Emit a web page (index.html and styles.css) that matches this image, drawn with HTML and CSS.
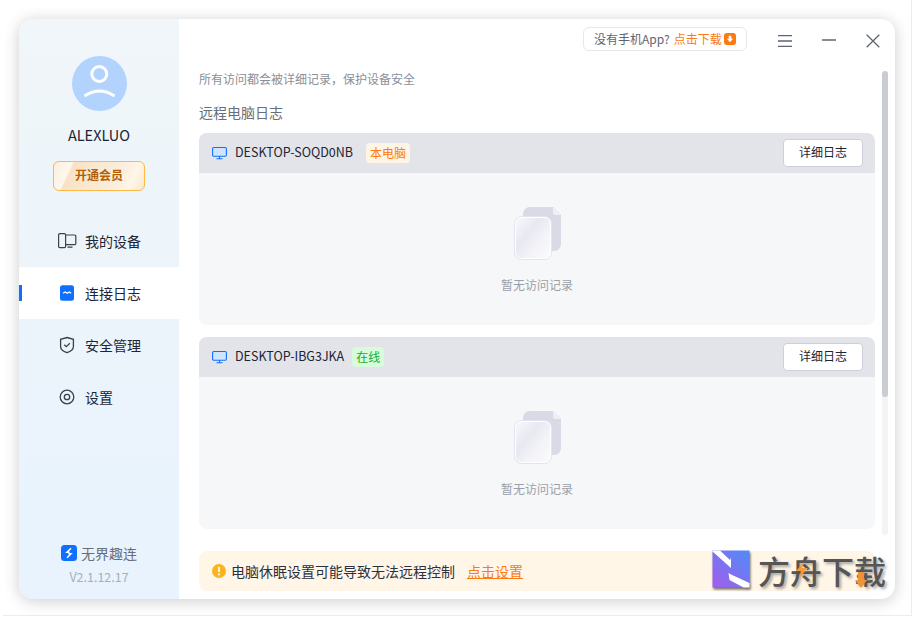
FILE: index.html
```html
<!DOCTYPE html>
<html lang="en">
<head>
    <meta charset="UTF-8">
    <meta name="viewport" content="width=device-width, initial-scale=1.0">
    <title>无界趣连</title>
    <link rel="stylesheet" href="styles.css">
</head>
<body>
    <div class="frame">
        <div class="window">
            <aside class="sidebar">
                <div class="avatar">
                    <svg width="55" height="55" viewBox="0 0 55 55" fill="none" stroke="#fff" stroke-width="3">
                        <circle cx="27.3" cy="18" r="7.500"/>
                        <path d="M12.500 40Q27.500 30 42.500 40"/>
                    </svg>
                </div>
                <div class="username">ALEXLUO</div>
                <button class="vip-btn">开通会员</button>
                <nav class="nav">
                    <div class="nav-item">
                        <svg width="20" height="20" viewBox="0 0 20 20" fill="none" stroke="#3a404c" stroke-width="1.200">
                            <rect x="1.600" y="2.600" width="7" height="14" rx="1.200"/>
                            <path d="M8.600 4h9a1.200 1.200 0 0 1 1.200 1.200v7.200a1.200 1.200 0 0 1-1.200 1.200h-9M10.500 16.200h5"/>
                        </svg>
                        <span>我的设备</span>
                    </div>
                    <div class="nav-item active">
                        <svg width="20" height="20" viewBox="0 0 20 20" fill="none">
                            <rect x="3" y="2.200" width="14" height="15.500" rx="2.500" fill="#0f6fff"/>
                            <path d="M6 10.300l2.200-1.300 2 1.300 2-1.300 2 1.300" stroke="#fff" stroke-width="1.200"/>
                        </svg>
                        <span>连接日志</span>
                    </div>
                    <div class="nav-item">
                        <svg width="20" height="20" viewBox="0 0 20 20" fill="none" stroke="#3a404c" stroke-width="1.300">
                            <path d="M10 2.500l6.400 1.800v7.200c0 2.800-2.800 5-6.400 6.200-3.600-1.200-6.400-3.400-6.400-6.200V4.300z"/>
                            <path d="M7.300 9.700l2 1.900 3.500-3.300"/>
                        </svg>
                        <span>安全管理</span>
                    </div>
                    <div class="nav-item">
                        <svg width="20" height="20" viewBox="0 0 20 20" fill="none" stroke="#3a404c" stroke-width="1.300">
                            <circle cx="10" cy="10" r="6.800"/>
                            <circle cx="10" cy="10" r="2.700"/>
                        </svg>
                        <span>设置</span>
                    </div>
                </nav>
                <div class="brand">
                    <div class="brand-name">
                        <svg width="16" height="16" viewBox="0 0 16 16" fill="none">
                            <rect width="16" height="16" rx="3.500" fill="#0f6fff"/>
                            <path d="M10 3.300L6 7.200h2.600M7.400 8.800H10L6 12.700" stroke="#fff" stroke-width="1.500"/>
                        </svg>
                        <span>无界趣连</span>
                    </div>
                    <div class="version">V2.1.12.17</div>
                </div>
            </aside>
            <main class="main">
                <header class="topbar">
                    <div class="app-pill">
                        <span>没有手机App?</span>
                        <span class="orange">点击下载</span>
                        <svg width="12" height="12" viewBox="0 0 12 12">
                            <rect width="12" height="12" rx="3" fill="#fb7b10"/>
                            <path d="M4.700 2.800h2.600v3h1.800L6 9.300 2.900 5.800h1.800z" fill="#fff"/>
                        </svg>
                    </div>
                    <div class="win-btns">
                        <svg width="14" height="12" viewBox="0 0 14 12" stroke="#5f6570" stroke-width="1.300">
                            <path d="M0 .7h14M0 6h14M0 11.300h14"/>
                        </svg>
                        <svg width="14" height="12" viewBox="0 0 14 12" stroke="#5f6570" stroke-width="1.300">
                            <path d="M0 5h14"/>
                        </svg>
                        <svg width="14" height="14" viewBox="0 0 14 14" stroke="#5f6570" stroke-width="1.300">
                            <path d="M.7 .7l12.600 12.600M13.300 .7L.7 13.300"/>
                        </svg>
                    </div>
                </header>
                <div class="content">
                    <p class="hint">所有访问都会被详细记录，保护设备安全</p>
                    <h2 class="section-title">远程电脑日志</h2>

                    <section class="card">
                        <div class="card-head">
                            <svg class="monitor" width="15" height="14" viewBox="0 0 15 14" fill="#cfe4ff" stroke="#0f6fff" stroke-width="1.100">
                                <rect x="0.600" y="1.500" width="13.800" height="8.800" rx="1.200"/>
                                <path d="M4.500 12.800h6M7.500 10.300v2.500" fill="none"/>
                            </svg>
                            <span class="device-name">DESKTOP-SOQD0NB</span>
                            <span class="tag tag-local">本电脑</span>
                            <button class="detail-btn">详细日志</button>
                        </div>
                        <div class="card-body">
                            <svg width="47" height="53" viewBox="0 0 47 53" fill="none">
                                <path d="M16 0h23l8 8v29c0 4-3 7-7 7H9V7c0-4 3-7 7-7z" fill="#d9dae6"/>
                                <path d="M39 0l8 8h-6c-1 0-2-1-2-2z" fill="#eeeef4"/>
                                <rect x="0.500" y="9.500" width="37" height="43" rx="7" fill="url(#sheet1)" stroke="#e2e2f0"/>
                                <rect x="1.500" y="10.500" width="35" height="41" rx="6" fill="none" stroke="#fff"/>
                                <defs>
                                    <linearGradient id="sheet1" x1="0.950" y1="0.950" x2="0.050" y2="0.100">
                                        <stop offset="0" stop-color="#fbfbfd"/>
                                        <stop offset="0.350" stop-color="#f3f3f8"/>
                                        <stop offset="0.650" stop-color="#e8e8f1"/>
                                        <stop offset="1" stop-color="#f6f6fa"/>
                                    </linearGradient>
                                </defs>
                            </svg>
                            <p class="empty-text">暂无访问记录</p>
                        </div>
                    </section>

                    <section class="card">
                        <div class="card-head">
                            <svg class="monitor" width="15" height="14" viewBox="0 0 15 14" fill="#cfe4ff" stroke="#0f6fff" stroke-width="1.100">
                                <rect x="0.600" y="1.500" width="13.800" height="8.800" rx="1.200"/>
                                <path d="M4.500 12.800h6M7.500 10.300v2.500" fill="none"/>
                            </svg>
                            <span class="device-name">DESKTOP-IBG3JKA</span>
                            <span class="tag tag-online">在线</span>
                            <button class="detail-btn">详细日志</button>
                        </div>
                        <div class="card-body">
                            <svg width="47" height="53" viewBox="0 0 47 53" fill="none">
                                <path d="M16 0h23l8 8v29c0 4-3 7-7 7H9V7c0-4 3-7 7-7z" fill="#d9dae6"/>
                                <path d="M39 0l8 8h-6c-1 0-2-1-2-2z" fill="#eeeef4"/>
                                <rect x="0.500" y="9.500" width="37" height="43" rx="7" fill="url(#sheet2)" stroke="#e2e2f0"/>
                                <rect x="1.500" y="10.500" width="35" height="41" rx="6" fill="none" stroke="#fff"/>
                                <defs>
                                    <linearGradient id="sheet2" x1="0.950" y1="0.950" x2="0.050" y2="0.100">
                                        <stop offset="0" stop-color="#fbfbfd"/>
                                        <stop offset="0.350" stop-color="#f3f3f8"/>
                                        <stop offset="0.650" stop-color="#e8e8f1"/>
                                        <stop offset="1" stop-color="#f6f6fa"/>
                                    </linearGradient>
                                </defs>
                            </svg>
                            <p class="empty-text">暂无访问记录</p>
                        </div>
                    </section>
                </div>
                <div class="alert">
                    <svg width="14" height="14" viewBox="0 0 14 14">
                        <circle cx="7" cy="7" r="7" fill="#fbb321"/>
                        <path d="M7 3v5M7 9.500v1.700" stroke="#fff" stroke-width="1.700"/>
                    </svg>
                    <span class="alert-text">电脑休眠设置可能导致无法远程控制</span>
                    <a class="alert-link">点击设置</a>
                </div>
                <div class="scrollbar"><div class="scrollbar-thumb"></div></div>
            </main>
        </div>
        <div class="watermark">
            <svg width="38" height="38" viewBox="0 0 38 38">
                <defs>
                    <linearGradient id="wm" x1="0" y1="1" x2="1" y2="0">
                        <stop offset="0" stop-color="#a45cec"/>
                        <stop offset="1" stop-color="#4f8cf8"/>
                    </linearGradient>
                </defs>
                <rect x="0.500" y="0.500" width="37" height="37" fill="url(#wm)"/>
                <path d="M0.500 1.500V.5h7.500l10 9.500 1-2.500v10.500zM17.500 30l-1-7 2.500 1.500 18.500 8.500v4.500h-6z" fill="#fff"/>
            </svg>
            <span class="wm-text">方舟下载</span>
            <svg class="wm-bolt" width="12" height="16" viewBox="0 0 12 16"><path d="M8 0L0 9h5l-2 7 9-10H6z" fill="#f79a3a"/></svg>
            <svg class="wm-arrow" width="12" height="16" viewBox="0 0 12 16"><path d="M3 0h6v8h3l-6 8-6-8h3z" fill="#ee9436"/></svg>
        </div>
    </div>
</body>
</html>
```

FILE: styles.css
```css
* {
    box-sizing: border-box;
}

html, body {
    height: 100%;
}

body {
    margin: 0;
    background-color: #fff;
    font-family: 'Noto Sans CJK SC', 'Noto Sans', sans-serif;
    overflow: hidden;
}

.frame {
    position: relative;
    width: 909px;
    height: 616px;
    margin-left: 3px;
    padding: 19px 16px 16px 16px;
    border-right: 1px solid #ececec;
    border-bottom: 1px solid #ececec;
}

.window {
    display: flex;
    width: 876px;
    height: 580px;
    border-radius: 14px;
    background-color: #fff;
    overflow: hidden;
    box-shadow: 0 2px 16px rgba(0, 0, 0, 0.2);
}

/* sidebar */
.sidebar {
    display: flex;
    flex-direction: column;
    align-items: center;
    width: 160px;
    flex-shrink: 0;
    padding-top: 37px;
    background: linear-gradient(180deg, #f0f6f9 0%, #ecf4fb 50%, #e8f3fe 100%);
}

.avatar {
    width: 55px;
    height: 55px;
    border-radius: 50%;
    background-color: #b3d3ff;
}

.avatar svg {
    display: block;
}

.username {
    margin-top: 12px;
    font-size: 14.5px;
    line-height: 24px;
    color: #1d2433;
}

.vip-btn {
    width: 92px;
    height: 30px;
    margin-top: 14px;
    border: 1px solid #fdbb45;
    border-radius: 6px;
    background: linear-gradient(115deg, #fbeedd 0%, #fff7ec 18%, #f9e2c6 20%, #fbeedd 70%, #fff6e8 85%, #fae6cc 100%);
    font-family: inherit;
    font-size: 12px;
    font-weight: 700;
    color: #b45f06;
    padding: 0 0 3px;
}

.nav {
    align-self: stretch;
    margin-top: 24px;
}

.nav-item {
    position: relative;
    display: flex;
    align-items: center;
    gap: 8px;
    height: 52px;
    padding-left: 38px;
    font-size: 14px;
    color: #1d2433;
}

.nav-item svg {
    flex-shrink: 0;
}

.nav-item.active {
    background-color: #fff;
}

.nav-item.active::before {
    content: "";
    position: absolute;
    left: 0;
    top: 18px;
    width: 3px;
    height: 16px;
    background-color: #0f6fff;
}

.brand {
    margin-top: auto;
    padding-bottom: 13px;
    text-align: center;
}

.brand-name {
    display: flex;
    align-items: center;
    gap: 4px;
    font-size: 14px;
    line-height: 22px;
    color: #686e7a;
}

.version {
    margin-top: 4px;
    font-size: 12.5px;
    line-height: 18px;
    color: #a9aeb9;
}

/* main area */
.main {
    position: relative;
    display: flex;
    flex-direction: column;
    flex: 1;
    min-width: 0;
}

.topbar {
    display: flex;
    align-items: center;
    justify-content: flex-end;
    height: 40px;
    padding: 0 15px 0 0;
}

.app-pill {
    display: flex;
    align-items: center;
    width: 164px;
    height: 24px;
    padding: 0 0 2px 10px;
    border: 1px solid #e6e8ee;
    border-radius: 6px;
    font-size: 12px;
    color: #5f6570;
}

.app-pill svg {
    margin-top: 2px;
}

.orange {
    margin-left: 4px;
    margin-right: 2px;
    color: #fb7b10;
}

.win-btns {
    display: flex;
    align-items: center;
    gap: 30px;
    margin-left: 31px;
    margin-top: 4px;
}

.win-btns svg {
    display: block;
}

.content {
    flex: 1;
    padding: 10px 20px 0;
}

.hint {
    margin: 0;
    font-size: 12px;
    line-height: 20px;
    color: #8a8f99;
}

.section-title {
    margin: 13px 0 11px;
    font-size: 14px;
    font-weight: 400;
    line-height: 20px;
    color: #686e7a;
}

.card {
    height: 192px;
    margin-bottom: 12px;
    border-radius: 8px;
    background-color: #f6f7f9;
    overflow: hidden;
}

.card-head {
    display: flex;
    align-items: center;
    height: 40px;
    padding: 0 12px 0 13px;
    background-color: #e3e4ea;
}

.monitor {
    flex-shrink: 0;
    margin-right: 8px;
}

.device-name {
    padding-bottom: 3px;
    font-size: 12.5px;
    color: #1d2433;
}

.tag {
    height: 20px;
    padding: 0 4px;
    border-radius: 4px;
    font-size: 12px;
    line-height: 19px;
}

.tag-local {
    margin-left: 13px;
    background-color: #fff5e6;
    color: #fb7b10;
}

.tag-online {
    margin-left: 8px;
    background-color: #d8fbdc;
    color: #12ad2b;
}

.detail-btn {
    width: 80px;
    height: 28px;
    margin-left: auto;
    padding: 0 0 3px;
    border: 1px solid #cdd0d8;
    border-radius: 4px;
    background-color: #fff;
    font-family: inherit;
    font-size: 12px;
    color: #1d2433;
}

.card-body {
    display: flex;
    flex-direction: column;
    align-items: center;
    padding-top: 34px;
}

.card-body svg {
    display: block;
}

.empty-text {
    margin: 15px 0 0;
    font-size: 12px;
    line-height: 20px;
    color: #9aa0aa;
}

.alert {
    display: flex;
    align-items: center;
    height: 40px;
    margin: 0 20px 8px;
    padding-left: 13px;
    border-radius: 8px;
    background-color: #fff6e8;
}

.alert-text {
    margin-left: 5px;
    font-size: 14px;
    color: #2b3140;
}

.alert-link {
    margin-left: 12px;
    font-size: 14px;
    color: #fb7b10;
    text-decoration: underline;
}

.scrollbar {
    position: absolute;
    top: 52px;
    right: 7px;
    width: 6px;
    height: 464px;
    border-radius: 3px;
    background-color: #f3f4f6;
}

.scrollbar-thumb {
    height: 326px;
    border-radius: 3px;
    background-color: #c9ccd3;
}

/* watermark sits over the window corner */
.watermark {
    position: absolute;
    left: 709px;
    top: 550px;
    width: 180px;
    height: 40px;
}

.watermark > svg:first-child {
    filter: drop-shadow(1px 2px 1px rgba(0, 0, 0, 0.55));
}

.wm-text {
    position: absolute;
    left: 46px;
    top: 1px;
    font-size: 32px;
    font-weight: 500;
    line-height: 38px;
    color: #555;
    white-space: nowrap;
    text-shadow: 2px 2px 3px rgba(0, 0, 0, 0.35);
}

.wm-bolt {
    position: absolute;
    left: 84px;
    top: 12px;
}

.wm-arrow {
    position: absolute;
    left: 143px;
    top: 22px;
}
```
